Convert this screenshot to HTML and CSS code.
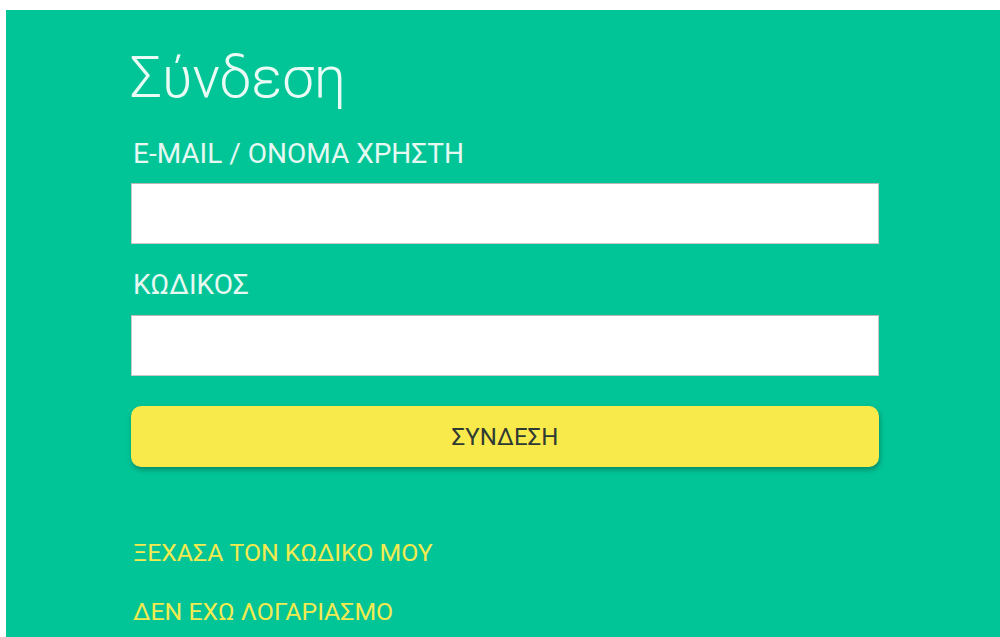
FILE: index.html
```html
<!DOCTYPE html>
<html lang="el">
<head>
<meta charset="utf-8">
<title>Σύνδεση</title>
<link rel="stylesheet" href="styles.css">
</head>
<body>
<div class="page">
  <main class="panel">
    <form class="login" onsubmit="return false">
      <h1 class="login-title">Σύνδεση</h1>
      <label class="field-label" for="user">E-MAIL / ΟΝΟΜΑ ΧΡΗΣΤΗ</label>
      <input class="field-input" id="user" type="text">
      <label class="field-label" for="pass">ΚΩΔΙΚΟΣ</label>
      <input class="field-input" id="pass" type="password">
      <button class="login-btn" type="submit">ΣΥΝΔΕΣΗ</button>
      <nav class="login-links">
        <a class="login-link" href="#">ΞΕΧΑΣΑ ΤΟΝ ΚΩΔΙΚΟ ΜΟΥ</a>
        <a class="login-link" href="#">ΔΕΝ ΕΧΩ ΛΟΓΑΡΙΑΣΜΟ</a>
      </nav>
    </form>
  </main>
</div>
</body>
</html>
```

FILE: styles.css
```css
html, body {
  margin: 0;
  height: 100%;
  background: #ffffff;
}

body {
  font-family: Roboto, "Noto Sans", "Liberation Sans", sans-serif;
  overflow: hidden;
}

.page {
  height: 100%;
  box-sizing: border-box;
  padding: 10px 0 0 6px;
  display: flex;
}

.panel {
  flex: 1;
  background: #02c597;
  padding: 0 121px 0 125px;
}

.login {
  display: flex;
  flex-direction: column;
  width: 748px;
}

.login-title {
  margin: 35px 0 0 -1px;
  font-weight: 300;
  font-size: 57px;
  line-height: 66px;
  color: #e9fbf5;
}

.field-label {
  margin: 25px 0 0 2px;
  font-size: 28px;
  line-height: 32px;
  color: #e6f8f2;
}

.login-title + .field-label {
  margin-top: 27px;
}

.field-input {
  box-sizing: border-box;
  height: 61px;
  margin: 13px 0 0 0;
  border: 1px solid #c9c9c9;
  border-top-color: #b8b8b8;
  background: #ffffff;
  outline: none;
  font: inherit;
  font-size: 22px;
  padding: 0 12px;
}

.field-input#pass {
  margin-top: 14px;
}

.login-btn {
  margin-top: 30px;
  height: 61px;
  border: 0;
  border-radius: 10px;
  background: #f9ea4b;
  color: #2f3a33;
  font: inherit;
  font-size: 24px;
  box-shadow: 1px 3px 5px rgba(0, 70, 50, 0.45);
  cursor: pointer;
}

.login-links {
  display: flex;
  flex-direction: column;
  gap: 29px;
  margin-top: 71px;
}

.login-link {
  margin-left: 2px;
  font-size: 24.8px;
  line-height: 30px;
  color: #f3ea50;
  text-decoration: none;
}
```
